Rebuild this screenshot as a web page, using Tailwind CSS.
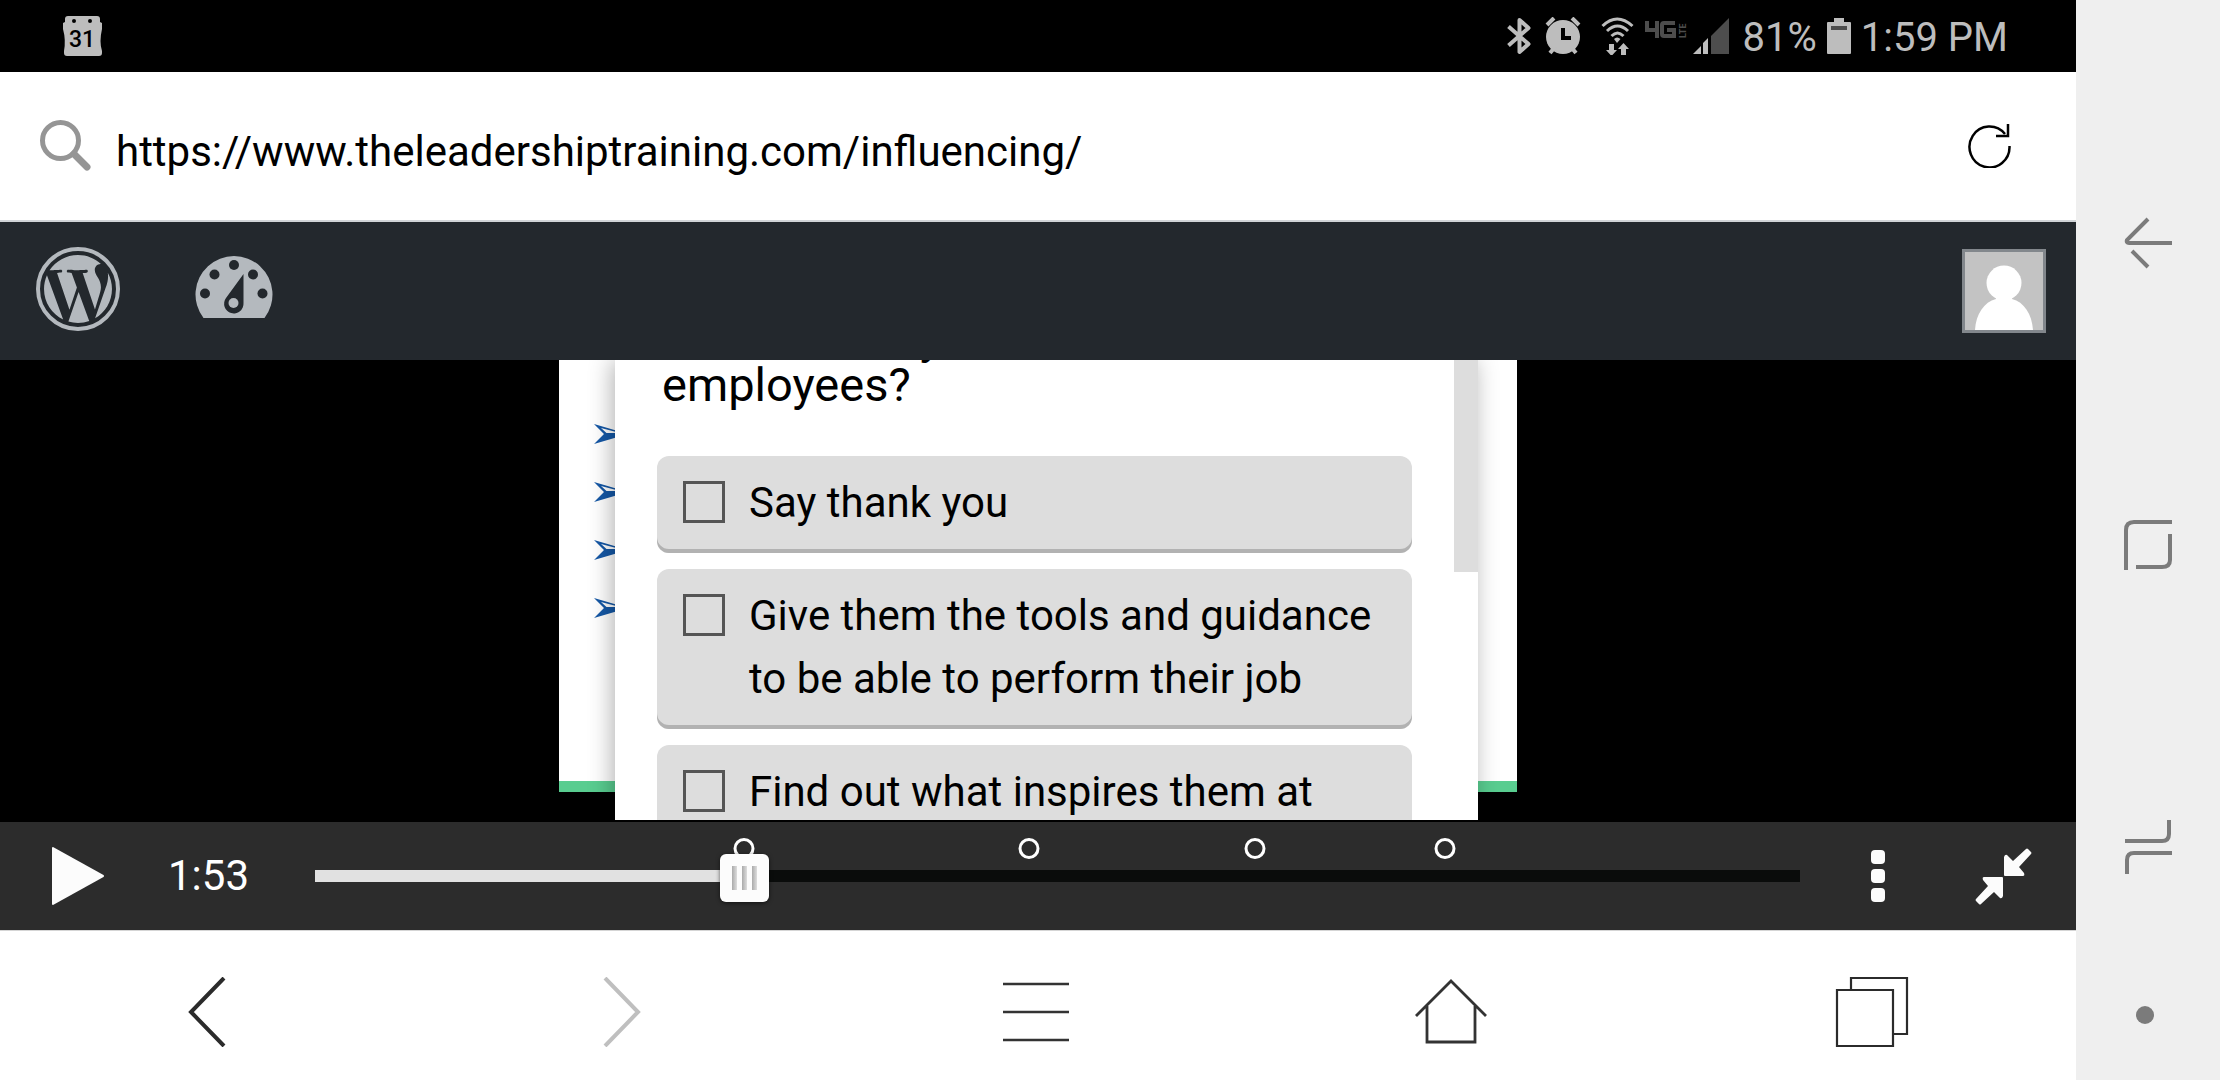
<!DOCTYPE html>
<html lang="en">
<head>
<meta charset="utf-8">
<meta name="viewport" content="width=device-width, initial-scale=1">
<title>The Leadership Training – Influencing</title>
<script src="https://cdn.jsdelivr.net/npm/@tailwindcss/browser@4"></script>
</head>
<body class="flex h-screen overflow-hidden bg-white font-[Roboto,sans-serif] text-black">

<div class="flex min-w-0 flex-1 flex-col">

  <!-- Status bar -->
  <header class="flex h-[72px] shrink-0 items-center justify-between bg-black pr-[68px] pl-[63px] text-[#bdbdbd]">
    <svg width="39" height="40" viewBox="0 0 39 40" role="img" aria-label="Calendar">
      <path fill="currentColor" fill-rule="evenodd" d="M5 0h29q3 0 3 3v3l2 1v6q-3 13 0 22v2q0 3-3 3H4q-3 0-3-3v-2q2-11-1-22V7l2-1V3q0-3 3-3zM11 3a2 2 0 1 0 0 4 2 2 0 0 0 0-4zM27 3a2 2 0 1 0 0 4 2 2 0 0 0 0-4z"/>
      <text x="19" y="31" text-anchor="middle" font-family="Roboto, sans-serif" font-weight="500" font-size="23" fill="#000">31</text>
    </svg>
    <div class="flex items-center">
      <svg class="mr-3.5" width="24" height="38" viewBox="0 0 24 38" fill="none" stroke="currentColor" stroke-width="4" role="img" aria-label="Bluetooth">
        <path d="M1.500 9.500 21.500 27 12.500 35V3L21.500 11 1.500 28.500" stroke-linejoin="round"/>
      </svg>
      <svg class="mr-5" width="36" height="38" viewBox="0 0 36 38" role="img" aria-label="Alarm">
        <circle cx="18" cy="20" r="17" fill="currentColor"/>
        <path d="M2 8l7-7M34 8l-7-7M5 36l5-6M31 36l-5-6" stroke="currentColor" stroke-width="4"/>
        <path d="M18 11v10h8" fill="none" stroke="#000" stroke-width="4"/>
      </svg>
      <svg class="mr-[11px]" width="33" height="38" viewBox="0 0 33 38" fill="none" stroke="currentColor" stroke-width="3" role="img" aria-label="Wi-Fi">
        <path d="M1.500 9Q16 -5 31.500 9M6 14Q16.500 4 27 14M10.500 19Q16.500 13 22.500 19"/>
        <path d="M13 22q3-3 6.500 0L16 26z" fill="currentColor" stroke="none"/>
        <path d="M8 27h5v6h3l-5.500 6L5 33h3zM20 38h5v-6h3l-5.500-6L17 32h3z" fill="currentColor" stroke="none"/>
      </svg>
      <svg class="mr-1.5 text-[#4d4d4d]" width="42" height="38" viewBox="0 0 42 38" role="img" aria-label="4G LTE">
        <path d="M2 4v9h11M12 4v17M30 6H19q-2 0-2 2v9q0 2 2 2h10v-6h-7" fill="none" stroke="currentColor" stroke-width="4"/>
        <text transform="translate(41 21) rotate(-90)" font-family="Roboto, sans-serif" font-weight="700" font-size="9" fill="currentColor">LTE</text>
      </svg>
      <svg class="mr-3.5" width="36" height="36" viewBox="0 0 36 36" role="img" aria-label="Signal">
        <path d="M0 36l8-8v8zM10 36V25l5-5v16z" fill="currentColor"/>
        <path d="M18 36V18L36 0v36z" fill="#4d4d4d"/>
      </svg>
      <span class="mr-2.5 pt-1 text-[40px] leading-[46px]">81%</span>
      <svg class="mr-2.5" width="24" height="36" viewBox="0 0 24 36" role="img" aria-label="Battery">
        <path d="M7 0h10v4h6q1 0 1 1v30q0 1-1 1H1q-1 0-1-1V5q0-1 1-1h6z" fill="currentColor"/>
        <path d="M4 8h16v4H4z" fill="#4d4d4d"/>
      </svg>
      <span class="pt-1 text-[40px] leading-[46px]">1:59 PM</span>
    </div>
  </header>

  <!-- Address bar -->
  <form class="flex h-[150px] shrink-0 items-center border-b-2 border-[#d0d4d7] bg-white pr-16 pl-10">
    <label for="address" aria-label="Address" class="mr-6">
      <svg width="52" height="52" viewBox="0 0 52 52" fill="none" stroke="#959595" stroke-linecap="round">
        <circle cx="20.500" cy="20.500" r="18" stroke-width="5"/>
        <path d="M34 34l13 13" stroke-width="7"/>
      </svg>
    </label>
    <input id="address" type="text" value="https://www.theleadershiptraining.com/influencing/" class="h-16 min-w-0 flex-1 bg-transparent pt-2.5 text-[42px] outline-none">
    <button type="button" aria-label="Reload">
      <svg width="44" height="44" viewBox="0 0 44 44" fill="none" stroke="#000" stroke-width="2.500">
        <path d="M41.500 22A20 20.500 0 1 1 37 10"/>
        <path d="M40 0v12H28"/>
      </svg>
    </button>
  </form>

  <!-- WordPress admin bar -->
  <nav class="flex h-[138px] shrink-0 items-center bg-[#23282d] pr-[30px] pl-9 text-[#b4b9be]">
    <a href="#about" aria-label="WordPress" class="mr-[75px]">
      <svg width="84" height="84" viewBox="0 0 84 84" class="mb-1" fill="currentColor">
        <circle cx="42" cy="42" r="40" fill="none" stroke="currentColor" stroke-width="4"/>
        <path transform="translate(4.200 4.200) scale(3.150)" d="M21.469 6.825c.84 1.537 1.318 3.3 1.318 5.175 0 3.979-2.156 7.456-5.363 9.325l3.295-9.527c.615-1.54.82-2.771.82-3.864 0-.405-.026-.78-.07-1.11m-7.981.105c.647-.03 1.232-.105 1.232-.105.582-.075.514-.93-.067-.899 0 0-1.755.135-2.88.135-1.064 0-2.85-.15-2.85-.15-.585-.03-.661.855-.075.885 0 0 .54.061 1.125.09l1.68 4.605-2.37 7.08L5.354 6.9c.649-.03 1.234-.1 1.234-.1.585-.075.516-.93-.065-.896 0 0-1.746.138-2.874.138-.2 0-.438-.008-.69-.015C4.911 3.15 8.235 1.215 12 1.215c2.809 0 5.365 1.072 7.286 2.833-.046-.003-.091-.009-.141-.009-1.06 0-1.812.923-1.812 1.914 0 .89.513 1.643 1.06 2.531.411.72.89 1.643.89 2.977 0 .915-.354 1.994-.821 3.479l-1.075 3.585-3.9-11.61.001.014zM12 22.784c-1.059 0-2.081-.153-3.048-.437l3.237-9.406 3.315 9.087c.024.053.05.101.078.149-1.12.393-2.325.609-3.582.609M1.211 12c0-1.564.336-3.05.935-4.39L7.29 21.709C3.694 19.96 1.212 16.271 1.211 12"/>
      </svg>
    </a>
    <a href="#dashboard" aria-label="Dashboard">
      <svg width="78" height="64" viewBox="0 0 78 64" class="mb-2">
        <path fill="currentColor" d="M8.500 63A38.500 38.500 0 1 1 69.500 63z"/>
        <g fill="#23282d">
          <circle cx="39" cy="10" r="5"/><circle cx="19.500" cy="19.500" r="5"/><circle cx="58" cy="19.500" r="5"/><circle cx="10" cy="38.500" r="5"/><circle cx="67.500" cy="38.500" r="5"/>
          <path d="M48.500 19V48A9.700 9.700 0 1 1 31 43z"/>
        </g>
        <circle cx="38.500" cy="48" r="5" fill="currentColor"/>
      </svg>
    </a>
    <a href="#profile" aria-label="My profile" class="ml-auto border-3 border-[#82878c]">
      <svg width="78" height="78" viewBox="0 0 78 78">
        <path fill="#c3c3c3" d="M0 0h78v78H0z"/>
        <circle cx="39" cy="31" r="17.500" fill="#fff"/>
        <path fill="#fff" d="M10 78C11 62 19 50 31 47V44H47V47C59 50 67 62 68 78z"/>
      </svg>
    </a>
  </nav>

  <!-- Lesson slide with the quiz panel over it -->
  <main class="grid min-h-0 flex-1 grid-cols-[958px] grid-rows-[minmax(0,1fr)] justify-center overflow-hidden bg-black pb-0.5">
    <div class="col-start-1 row-start-1 mb-7 overflow-hidden border-b-[11px] border-[#59cd90] bg-white pt-16 pl-[35px]">
      <ul class="flex flex-col gap-[38px]">
        <li><svg width="34" height="20" viewBox="0 0 34 20"><path fill="#1558a6" fill-rule="evenodd" d="M0 0 34 10 0 20 10 10zM7 4 12.500 9H26z"/></svg></li>
        <li><svg width="34" height="20" viewBox="0 0 34 20"><path fill="#1558a6" fill-rule="evenodd" d="M0 0 34 10 0 20 10 10zM7 4 12.500 9H26z"/></svg></li>
        <li><svg width="34" height="20" viewBox="0 0 34 20"><path fill="#1558a6" fill-rule="evenodd" d="M0 0 34 10 0 20 10 10zM7 4 12.500 9H26z"/></svg></li>
        <li><svg width="34" height="20" viewBox="0 0 34 20"><path fill="#1558a6" fill-rule="evenodd" d="M0 0 34 10 0 20 10 10zM7 4 12.500 9H26z"/></svg></li>
      </ul>
    </div>
    <section class="z-10 col-start-1 row-start-1 mr-[39px] ml-14 flex items-start bg-white shadow-[-3px_0_22px_rgba(0,0,0,0.3)] [clip-path:inset(0_-30px_0_-30px)]">
      <div class="h-full min-w-0 flex-1 overflow-hidden px-[42px]">
        <h1 class="-mt-[46px] mb-12 pl-[5px] text-[47px] leading-[47px]">What would you offer<br>employees?</h1>
        <div class="flex flex-col gap-4">
          <label class="flex shrink-0 items-start gap-6 rounded-xl bg-[#ddd] px-[26px] pt-[15px] pb-[15px] text-[42px] leading-[63px] shadow-[inset_0_-4px_0_#b2b2b2]">
            <input type="checkbox" class="mt-2.5 size-[42px] shrink-0 appearance-none border-[3px] border-[#555]">
            <span class="pb-1">Say thank you</span>
          </label>
          <label class="flex shrink-0 items-start gap-6 rounded-xl bg-[#ddd] px-[26px] pt-[15px] pb-[15px] text-[42px] leading-[63px] shadow-[inset_0_-4px_0_#b2b2b2]">
            <input type="checkbox" class="mt-2.5 size-[42px] shrink-0 appearance-none border-[3px] border-[#555]">
            <span class="pb-1">Give them the tools and guidance to be able to perform their job</span>
          </label>
          <label class="flex shrink-0 items-start gap-6 rounded-xl bg-[#ddd] px-[26px] pt-[15px] pb-[15px] text-[42px] leading-[63px] shadow-[inset_0_-4px_0_#b2b2b2]">
            <input type="checkbox" class="mt-2.5 size-[42px] shrink-0 appearance-none border-[3px] border-[#555]">
            <span class="pb-1">Find out what inspires them at</span>
          </label>
        </div>
      </div>
      <div class="h-[212px] w-6 shrink-0 bg-[#ddd]"></div>
    </section>
  </main>

  <!-- Player controls -->
  <div class="flex h-[108px] shrink-0 items-center bg-[#2c2c2c] pr-11 pl-[52px] text-[#fcfcfc]">
    <button type="button" aria-label="Play" class="mr-16">
      <svg width="52" height="58" viewBox="0 0 52 58"><path fill="currentColor" d="M0 1q0-1 1-1L51.500 28q1 1 0 2L1 58q-1 0-1-1z"/></svg>
    </button>
    <span class="w-[147px] shrink-0 text-[42px] leading-[48px] text-white">1:53</span>
    <div class="relative flex h-12 min-w-0 flex-1 items-center">
      <button type="button" aria-label="Question 1" style="left:28.9%" class="absolute -top-3.5 size-[21px] -translate-x-1/2 rounded-full border-3 border-white"></button>
      <button type="button" aria-label="Question 2" style="left:48.1%" class="absolute -top-3.5 size-[21px] -translate-x-1/2 rounded-full border-3 border-white"></button>
      <button type="button" aria-label="Question 3" style="left:63.3%" class="absolute -top-3.5 size-[21px] -translate-x-1/2 rounded-full border-3 border-white"></button>
      <button type="button" aria-label="Question 4" style="left:76.1%" class="absolute -top-3.5 size-[21px] -translate-x-1/2 rounded-full border-3 border-white"></button>
      <input type="range" min="0" max="1000" value="282" aria-label="Seek" class="relative h-3 w-full appearance-none bg-[linear-gradient(90deg,#e1e1e1_29%,#0a0c0b_29%)] [&::-webkit-slider-thumb]:mt-1 [&::-webkit-slider-thumb]:h-12 [&::-webkit-slider-thumb]:w-[49px] [&::-webkit-slider-thumb]:appearance-none [&::-webkit-slider-thumb]:rounded-md [&::-webkit-slider-thumb]:bg-[#fcfcfc] [&::-webkit-slider-thumb]:bg-[linear-gradient(90deg,transparent_12px,#aaa_12px,#ddd_17px,transparent_17px,transparent_22px,#aaa_22px,#ddd_27px,transparent_27px,transparent_32px,#aaa_32px,#ddd_37px,transparent_37px)] [&::-webkit-slider-thumb]:bg-[length:100%_24px] [&::-webkit-slider-thumb]:bg-center [&::-webkit-slider-thumb]:bg-no-repeat [&::-webkit-slider-thumb]:shadow-[0_1px_4px_rgba(0,0,0,0.6)]">
    </div>
    <button type="button" aria-label="More options" class="mr-[90px] ml-[71px] flex flex-col gap-[5px]">
      <span class="size-3.5 rounded-sm bg-current"></span>
      <span class="size-3.5 rounded-sm bg-current"></span>
      <span class="size-3.5 rounded-sm bg-current"></span>
    </button>
    <button type="button" aria-label="Exit full screen">
      <svg width="57" height="57" viewBox="0 0 57 57" fill="currentColor">
        <path d="M51 1q1-1 2 0l3 3q1 1 0 2L44 19l5 6q1 3-1 3H30q-1 0-1-1V9q1-3 3-2l6 6z"/>
        <path transform="rotate(180 28.500 28.500)" d="M51 1q1-1 2 0l3 3q1 1 0 2L44 19l5 6q1 3-1 3H30q-1 0-1-1V9q1-3 3-2l6 6z"/>
      </svg>
    </button>
  </div>

  <!-- Browser toolbar -->
  <nav class="grid h-[150px] shrink-0 grid-cols-5 place-items-center border-t border-[#d5d5d5] bg-white pt-8 pb-5">
    <button type="button" aria-label="Back" class="mr-0.5">
      <svg width="38" height="70" viewBox="0 0 38 70" fill="none" stroke="#2b2b2b" stroke-width="4"><path d="M36 1 3 35 36 69"/></svg>
    </button>
    <button type="button" aria-label="Forward" disabled class="mr-0.5">
      <svg width="38" height="70" viewBox="0 0 38 70" fill="none" stroke="#bfbfbf" stroke-width="4"><path d="M2 1 35 35 2 69"/></svg>
    </button>
    <button type="button" aria-label="Menu" class="mr-1">
      <svg width="66" height="60" viewBox="0 0 66 60" stroke="#333" stroke-width="2.500"><path d="M0 2h66M0 30h66M0 58h66"/></svg>
    </button>
    <button type="button" aria-label="Home" class="mr-1">
      <svg width="72" height="66" viewBox="0 0 72 66" fill="none" stroke="#333" stroke-width="2.800"><path d="M1 37 36 2l35 35M12 27v36h48V27"/></svg>
    </button>
    <button type="button" aria-label="Tabs" class="ml-2">
      <svg width="74" height="72" viewBox="0 0 74 72" fill="none" stroke="#2b2b2b" stroke-width="2.200"><path d="M16 13V2h56v56H58M2 14h56v56H2z"/></svg>
    </button>
  </nav>
</div>

<!-- Device navigation -->
<aside class="flex w-36 shrink-0 flex-col items-center bg-[#efefef] pt-[92px] text-[#7b7b7b]">
  <button type="button" aria-label="Device back" class="flex flex-1 items-center">
    <svg width="48" height="54" viewBox="0 0 48 54" fill="none" stroke="currentColor" stroke-width="4"><path d="M24 3 3 24q-1 3 2 3H48M8 35l16 16"/></svg>
  </button>
  <button type="button" aria-label="Device home" class="flex flex-1 items-center">
    <svg width="48" height="50" viewBox="0 0 48 50" fill="none" stroke="currentColor" stroke-width="4"><path d="M2 50V10q0-8 8-8H48M46 14V40q0 7-8 7H12"/></svg>
  </button>
  <button type="button" aria-label="Recent apps" class="flex flex-1 items-center">
    <svg width="48" height="54" viewBox="0 0 48 54" fill="none" stroke="currentColor" stroke-width="4"><path d="M1 21H38q7 0 7-7V0M48 33H10q-7 0-7 7V54"/></svg>
  </button>
  <button type="button" aria-label="Hide navigation bar" class="mr-1.5 h-[82px] pt-2">
    <span class="mb-14 block size-[18px] rounded-full bg-current"></span>
  </button>
</aside>
</body>
</html>
